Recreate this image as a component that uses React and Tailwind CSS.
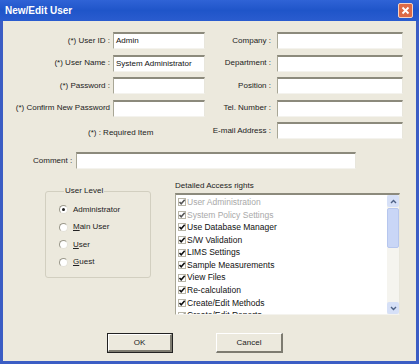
import React from "react";

const inputCls =
  "h-[17px] bg-white border-t-2 border-l border-t-[#8c8a7c] border-l-[#a9a796] border-b border-r border-b-[#f4f3ee] border-r-[#e8e6dc] flex items-center pl-[2px] text-[8px] text-[#111]";

function Row({ label, value, lw, iw, gap }) {
  return (
    <div className="flex items-center h-[17px]">
      <div className={`${lw} text-right text-[8px] text-[#222] whitespace-nowrap`}>{label}</div>
      <div className={`${gap} ${iw} ${inputCls}`}>{value}</div>
    </div>
  );
}

function Check({ gray }) {
  return (
    <svg width="8" height="8" viewBox="0 0 8 8" className="shrink-0">
      <rect x="0.5" y="0.5" width="7" height="7" fill="#fff" stroke="#b9b6a8" />
      <path d="M1.5 4 L3.2 5.8 L6.7 1.8" fill="none" stroke={gray ? "#555" : "#111"} strokeWidth="1.6" />
    </svg>
  );
}

function Radio({ checked, children }) {
  return (
    <div className="flex items-center h-[17.5px]">
      <div className="w-[9px] h-[9px] rounded-full bg-white border border-t-[#9a988a] border-l-[#9a988a] border-b-[#e4e2d8] border-r-[#e4e2d8] flex items-center justify-center">
        {checked && <div className="w-[3px] h-[3px] rounded-full bg-[#222]" />}
      </div>
      <div className="ml-[5px] text-[8px] text-[#222]">{children}</div>
    </div>
  );
}

const items = [
  ["User Administration", true],
  ["System Policy Settings", true],
  ["Use Database Manager", false],
  ["S/W Validation", false],
  ["LIMS Settings", false],
  ["Sample Measurements", false],
  ["View Files", false],
  ["Re-calculation", false],
  ["Create/Edit Methods", false],
  ["Create/Edit Reports", false],
];

export default function App() {
  return (
    <div
      className="w-[419px] h-[364px] flex flex-col bg-[#3b5dc4] overflow-hidden"
      style={{ fontFamily: '"Liberation Sans", Arial, sans-serif' }}
    >
      <div className="h-[21px] flex items-center pl-[5px] pr-[6px] bg-gradient-to-b from-[#2f63d6] via-[#1f55c9] to-[#2a5ccf]">
        <span className="text-white font-bold text-[10px]">New/Edit User</span>
        <div className="ml-auto w-[15px] h-[15px] rounded-[2px] bg-[#dd6a45] border border-[#f4d2c4] flex items-center justify-center">
          <svg width="9" height="9" viewBox="0 0 9 9">
            <path d="M1.5 1.5 L7.5 7.5 M7.5 1.5 L1.5 7.5" stroke="#fff" strokeWidth="1.8" />
          </svg>
        </div>
      </div>
      <div className="flex-1 mx-[3px] mb-[3px] bg-[#ece9dd] flex flex-col">
        <div className="flex pt-[11px]">
          <div className="flex flex-col gap-[5.5px] w-[202px]">
            <Row label="(*) User ID :" value="Admin" lw="w-[107px]" iw="w-[92px]" gap="ml-[3px]" />
            <Row label="(*) User Name :" value="System Administrator" lw="w-[107px]" iw="w-[92px]" gap="ml-[3px]" />
            <Row label="(*) Password :" value="" lw="w-[107px]" iw="w-[92px]" gap="ml-[3px]" />
            <Row label="(*) Confirm New Password" value="" lw="w-[107px]" iw="w-[92px]" gap="ml-[3px]" />
            <div className="h-[17px] flex items-center pl-[85px] pt-[5px] text-[8px] text-[#222]">(*) : Required Item</div>
          </div>
          <div className="flex flex-col gap-[5.5px]">
            <Row label="Company :" value="" lw="w-[66px]" iw="w-[126px]" gap="ml-[6px]" />
            <Row label="Department :" value="" lw="w-[66px]" iw="w-[126px]" gap="ml-[6px]" />
            <Row label="Position :" value="" lw="w-[66px]" iw="w-[126px]" gap="ml-[6px]" />
            <Row label="Tel. Number :" value="" lw="w-[66px]" iw="w-[126px]" gap="ml-[6px]" />
            <Row label="E-mail Address :" value="" lw="w-[66px]" iw="w-[126px]" gap="ml-[6px]" />
          </div>
        </div>
        <div className="flex items-center h-[17px] mt-[13px] pl-[30px]">
          <div className="w-[43px] text-[8px] text-[#222]">Comment :</div>
          <div className={`w-[280px] ${inputCls}`}></div>
        </div>
        <div className="flex mt-[11px]">
          <fieldset className="ml-[42px] mt-[6px] w-[106px] h-[92px] border border-[#d2cfc0] rounded-[3px] pl-[13px] pt-[5px]">
            <legend className="ml-[5px] px-[1px] text-[8px] text-[#222] leading-[10px]">User Level</legend>
            <Radio checked>Administrator</Radio>
            <Radio>
              <span className="underline">M</span>ain User
            </Radio>
            <Radio>
              <span className="underline">U</span>ser
            </Radio>
            <Radio>
              <span className="underline">G</span>uest
            </Radio>
          </fieldset>
          <div className="ml-[24px] flex flex-col">
            <div className="h-[11px] text-[8px] text-[#222] leading-[11px]">Detailed Access rights</div>
            <div className="mt-[2px] w-[225px] h-[122px] bg-white border-t-2 border-l border-t-[#8c8a7c] border-l-[#a9a796] border-b border-r border-b-[#f4f3ee] border-r-[#e8e6dc] flex overflow-hidden">
              <div className="flex-1 flex flex-col pt-[1px] pl-[2px] overflow-hidden">
                {items.map(([t, g]) => (
                  <div key={t} className="flex items-center h-[12.6px] shrink-0 gap-[1px]">
                    <Check gray={g} />
                    <span className={`text-[8.5px] whitespace-nowrap ${g ? "text-[#a9a9a9]" : "text-[#111]"}`}>{t}</span>
                  </div>
                ))}
              </div>
              <div className="w-[12px] flex flex-col bg-[#f5f4ef]">
                <div className="h-[12px] bg-[#d6e0f7] flex items-center justify-center rounded-[2px]">
                  <svg width="7" height="5" viewBox="0 0 7 5">
                    <path d="M1 4 L3.5 1.5 L6 4" fill="none" stroke="#4d6185" strokeWidth="1.4" />
                  </svg>
                </div>
                <div className="mt-[1px] h-[40px] bg-[#c9d6f6] rounded-[2px] border border-[#b6c6ee]" />
                <div className="flex-1" />
                <div className="h-[12px] bg-[#d6e0f7] flex items-center justify-center rounded-[2px]">
                  <svg width="7" height="5" viewBox="0 0 7 5">
                    <path d="M1 1 L3.5 3.5 L6 1" fill="none" stroke="#4d6185" strokeWidth="1.4" />
                  </svg>
                </div>
              </div>
            </div>
          </div>
        </div>
        <div className="flex mt-[18px] pl-[104px]">
          <div className="w-[66px] h-[20px] border border-[#222] flex">
            <div className="flex-1 border-t border-l border-t-white border-l-white border-b-2 border-r-2 border-b-[#7d7b70] border-r-[#7d7b70] bg-[#ece9dd] flex items-center justify-center text-[8px] text-[#222]">
              OK
            </div>
          </div>
          <div className="ml-[43px] w-[67px] h-[20px] border-t border-l border-t-white border-l-white border-b-2 border-r-2 border-b-[#7d7b70] border-r-[#7d7b70] bg-[#ece9dd] flex items-center justify-center text-[8px] text-[#222]">
            Cancel
          </div>
        </div>
      </div>
    </div>
  );
}
